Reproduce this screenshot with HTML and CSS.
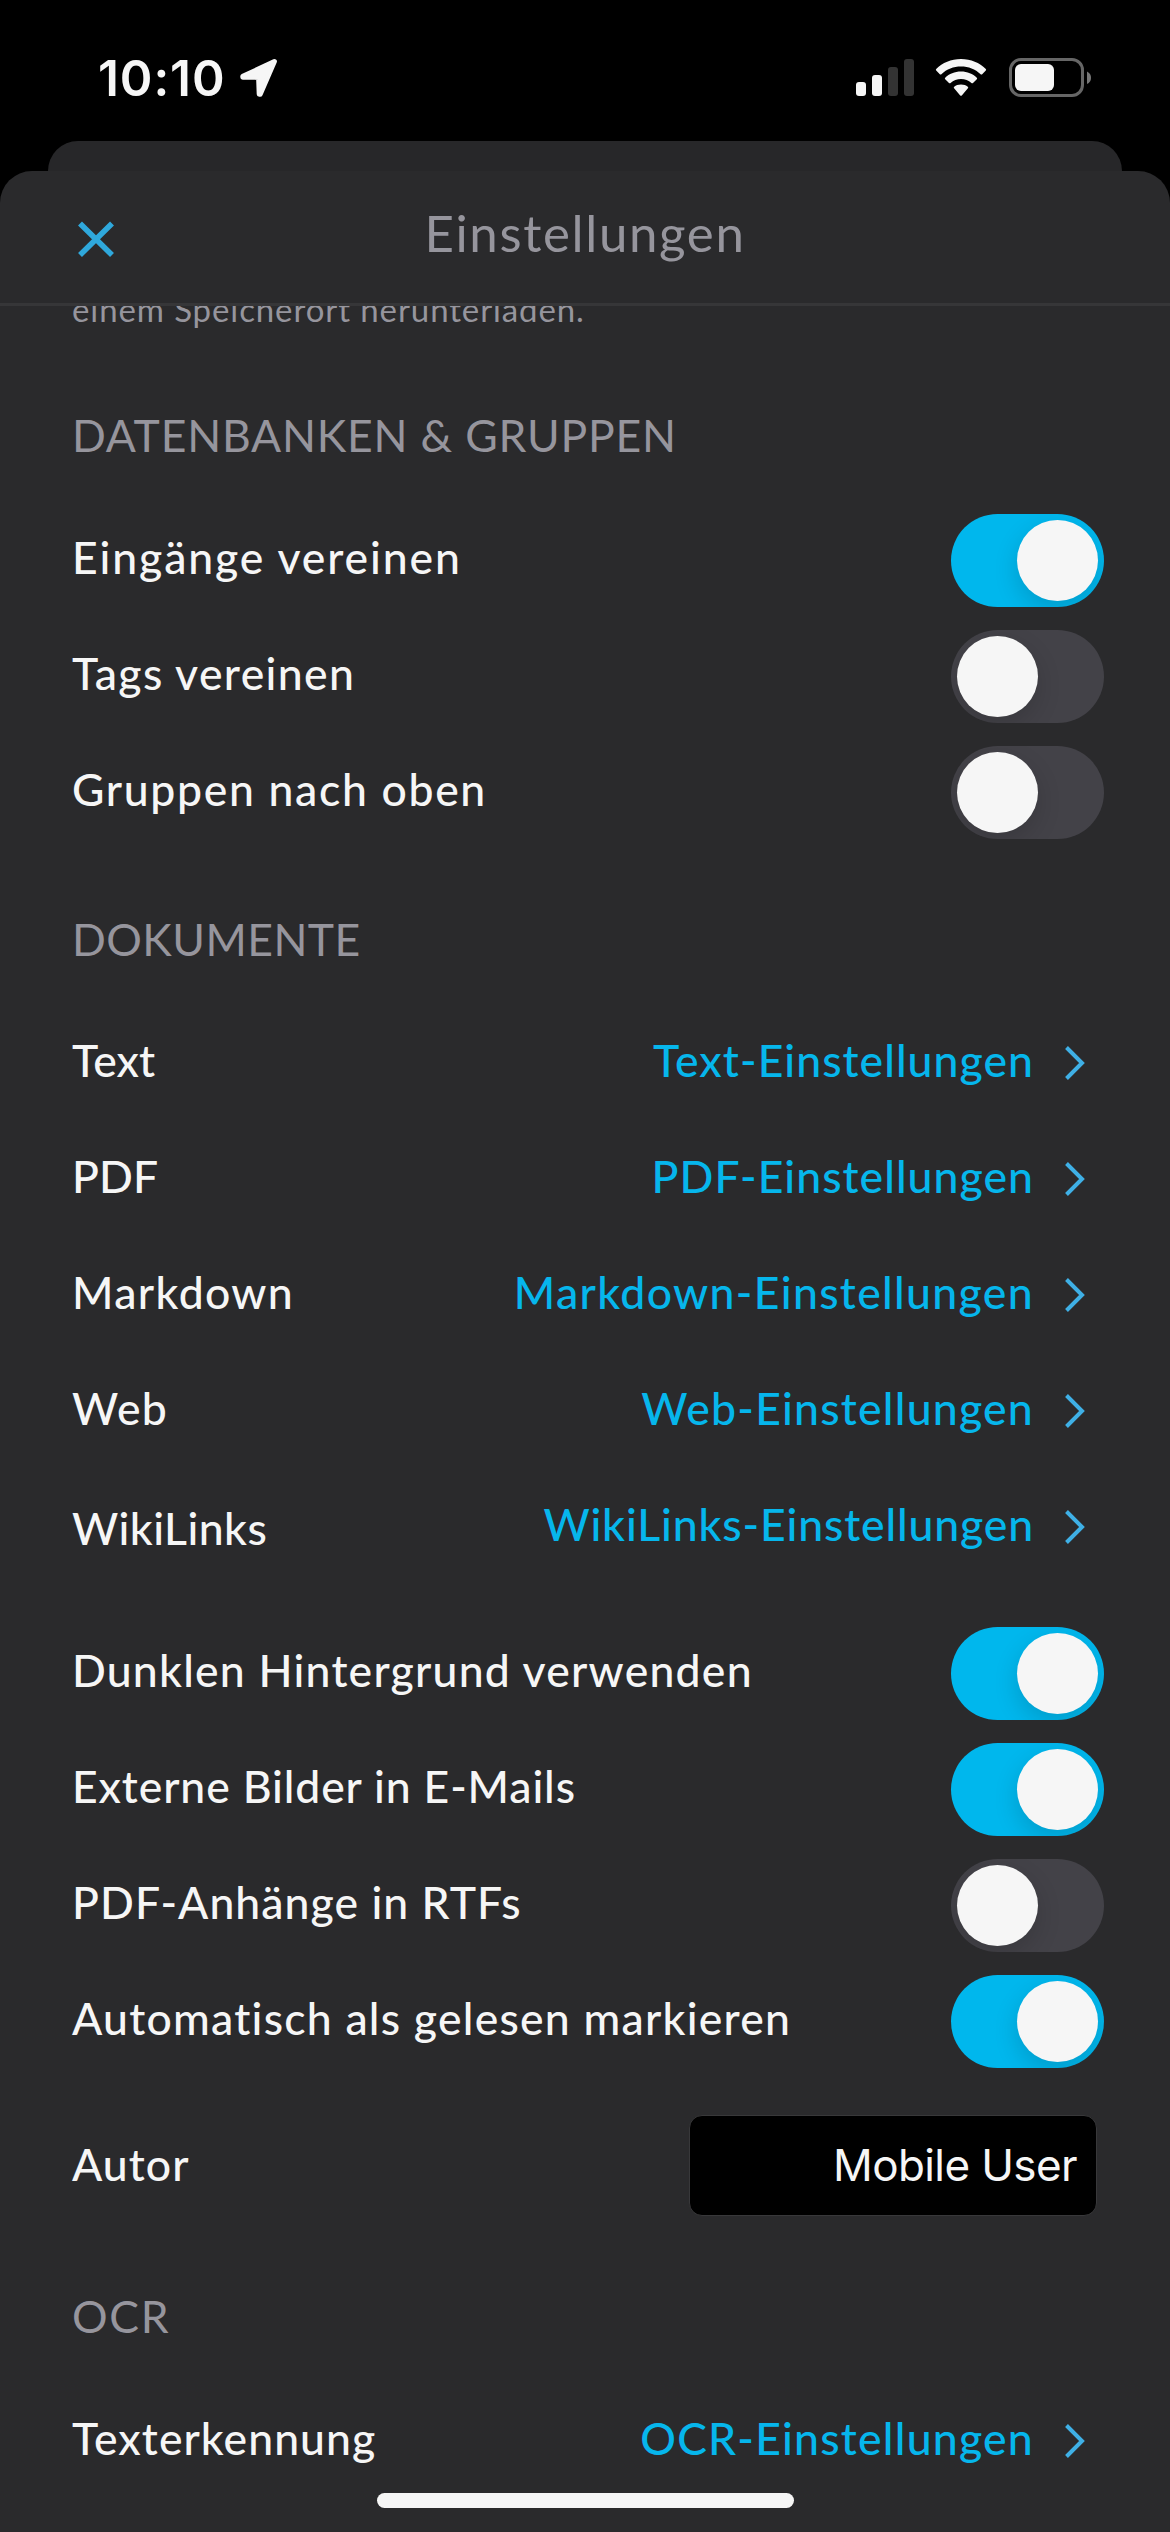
FILE: index.html
```html
<!DOCTYPE html>
<html lang="de">
<head>
<meta charset="utf-8">
<title>Einstellungen</title>
<link rel="stylesheet" href="styles.css">
</head>
<body>
<svg class="defs" width="0" height="0" aria-hidden="true">
  <symbol id="chevron" viewBox="0 0 22 36"><path d="M2.5 2.5 L18 18 L2.5 33.5" fill="none" stroke="currentColor" stroke-width="4"/></symbol>
</svg>

<header class="status">
  <div class="status-left">
    <span class="time">10:10</span>
    <svg class="location" viewBox="0 0 42 42" width="42" height="42"><path d="M36.4 4.6 L4.8 19.3 L4.8 20.2 L20.6 20.4 L21.2 37.2 L22.2 37.2 Z" fill="#f6f6f6" stroke="#f6f6f6" stroke-width="5" stroke-linejoin="round"/></svg>
  </div>
  <div class="status-right">
    <svg viewBox="0 0 58 40" width="58" height="40">
      <rect x="0" y="24" width="10" height="14" rx="3" fill="#f6f6f6"/>
      <rect x="16" y="17" width="10" height="21" rx="3" fill="#f6f6f6"/>
      <rect x="32" y="9" width="10" height="29" rx="3" fill="#333"/>
      <rect x="48" y="1" width="10" height="37" rx="3" fill="#333"/>
    </svg>
    <svg class="wifi" viewBox="0 0 52 40" width="52" height="40" fill="#f6f6f6">
      <path d="M26 1 C16 1 7.500 4.800 1.200 11 Q.5 11.800 1.200 12.600 L4.800 16.200 Q5.600 16.900 6.400 16.200 C11.700 11 18.500 8.500 26 8.500 C33.500 8.500 40.300 11 45.600 16.200 Q46.400 16.900 47.200 16.200 L50.800 12.600 Q51.500 11.800 50.800 11 C44.500 4.800 36 1 26 1 Z"/>
      <path d="M26 13.600 C19.700 13.600 14.200 16 10.200 19.700 Q9.400 20.500 10.200 21.300 L14 25 Q14.800 25.700 15.600 25 C18.400 22.500 22 21.100 26 21.100 C30 21.100 33.600 22.500 36.400 25 Q37.200 25.700 38 25 L41.800 21.300 Q42.600 20.500 41.800 19.700 C37.800 16 32.300 13.600 26 13.600 Z"/>
      <path d="M26 26.400 C23.200 26.400 20.900 27.300 19.200 28.700 Q18.300 29.500 19.100 30.300 L25.200 37.500 Q26 38.200 26.800 37.500 L32.900 30.300 Q33.700 29.500 32.800 28.700 C31.100 27.300 28.800 26.400 26 26.400 Z"/>
    </svg>
    <svg class="battery" viewBox="0 0 83 40" width="83" height="40">
      <rect x="1.500" y="1.500" width="72" height="36" rx="10.500" fill="none" stroke="#666" stroke-width="3"/>
      <rect x="6" y="6" width="39" height="27" rx="6" fill="#f6f6f6"/>
      <path d="M78 13.500 Q82 15.500 82 19.700 Q82 24 78 26 Z" fill="#777"/>
    </svg>
  </div>
</header>

<div class="card-behind"></div>

<main class="sheet">
  <div class="titlebar">
    <svg class="close" viewBox="0 0 38 38" width="38" height="38"><path d="M3 3.500 L35 35 M35 3.500 L3 35" fill="none" stroke="#2fa8dc" stroke-width="5.600"/></svg>
    <h1 class="title">Einstellungen</h1>
  </div>

  <div class="scroller">
    <p class="footnote">einem Speicherort herunterladen.</p>

    <section class="section section-databases">
      <h2 class="heading">DATENBANKEN &amp; GRUPPEN</h2>
      <div class="row"><span class="label track-7">Eingänge vereinen</span><span class="toggle on"></span></div>
      <div class="row"><span class="label track-5">Tags vereinen</span><span class="toggle"></span></div>
      <div class="row"><span class="label track-6">Gruppen nach oben</span><span class="toggle"></span></div>
    </section>

    <section class="section section-documents">
      <h2 class="heading track-1">DOKUMENTE</h2>
      <div class="row"><span class="label track-0">Text</span><a class="link track-3">Text-Einstellungen</a><svg class="chevron"><use href="#chevron"/></svg></div>
      <div class="row"><span class="label track-0">PDF</span><a class="link track-3">PDF-Einstellungen</a><svg class="chevron"><use href="#chevron"/></svg></div>
      <div class="row"><span class="label track-5">Markdown</span><a class="link track-5">Markdown-Einstellungen</a><svg class="chevron"><use href="#chevron"/></svg></div>
      <div class="row"><span class="label track-4">Web</span><a class="link track-4">Web-Einstellungen</a><svg class="chevron"><use href="#chevron"/></svg></div>
      <div class="row"><span class="label label-low track-1">WikiLinks</span><a class="link track-2">WikiLinks-Einstellungen</a><svg class="chevron"><use href="#chevron"/></svg></div>

      <div class="group">
        <div class="row"><span class="label track-4">Dunklen Hintergrund verwenden</span><span class="toggle on"></span></div>
        <div class="row"><span class="label track-2">Externe Bilder in E-Mails</span><span class="toggle on"></span></div>
        <div class="row"><span class="label track-3">PDF-Anhänge in RTFs</span><span class="toggle"></span></div>
        <div class="row"><span class="label track-4">Automatisch als gelesen markieren</span><span class="toggle on"></span></div>
      </div>

      <div class="row row-author"><span class="label track-3">Autor</span><span class="field">Mobile User</span></div>
    </section>

    <section class="section section-ocr">
      <h2 class="heading track-6">OCR</h2>
      <div class="row"><span class="label track-3">Texterkennung</span><a class="link track-4">OCR-Einstellungen</a><svg class="chevron"><use href="#chevron"/></svg></div>
    </section>
  </div>
</main>

<div class="home-indicator"></div>
</body>
</html>
```
FILE: styles.css
```css
* { box-sizing: border-box; }

body {
  margin: 0;
  width: 1170px;
  height: 2532px;
  overflow: hidden;
  display: flex;
  flex-direction: column;
  background: #000;
  color: #f6f6f6;
  font-family: Lato, "Noto Sans", sans-serif;
}

h1, h2, p { margin: 0; font-weight: 400; }
svg { display: block; flex: none; }
.defs { position: absolute; }

/* Status bar */
.status {
  flex: none;
  height: 141px;
  padding: 15px 78px 0 98px;
  display: flex;
  align-items: center;
  justify-content: space-between;
}
.status-left, .status-right { display: flex; align-items: center; }
.time {
  width: 140px;
  font: 600 49.5px/60px Inter, sans-serif;
  letter-spacing: 0.9px;
}
.wifi { margin-left: 21px; }
.battery { margin-left: 22px; }

/* Stacked sheets */
.card-behind {
  flex: none;
  height: 30px;
  margin: 0 48px;
  border-radius: 30px 30px 0 0;
  background: #272729;
}
.sheet {
  flex: 1;
  min-height: 0;
  display: flex;
  flex-direction: column;
  border-radius: 32px 32px 0 0;
  background: #2a2a2c;
}
.titlebar {
  flex: none;
  height: 135px;
  padding: 0 77px;
  display: grid;
  grid-template-columns: 38px 1fr 38px;
  align-items: center;
  border-bottom: 3px solid #363638;
}
.close { margin-top: 3px; }
.title {
  padding-bottom: 8px;
  text-align: center;
  font-size: 51px;
  line-height: 62px;
  letter-spacing: 1.65px;
  color: #96959d;
}

.scroller { flex: 1; min-height: 0; overflow: hidden; }
.footnote {
  margin-top: -17px;
  padding-left: 72px;
  font-size: 33px;
  line-height: 40px;
  letter-spacing: 0.9px;
  color: #96959d;
}

/* Sections */
.section { padding: 0 66px 0 72px; }
.section-databases { margin-top: 79px; }
.section-documents { margin-top: 62px; }
.section-ocr { margin-top: 64px; }
.heading {
  margin-bottom: 39px;
  font-size: 44.5px;
  line-height: 54px;
  letter-spacing: 0.8px;
  color: #96959d;
}
.section-databases .heading, .section-ocr .heading { margin-bottom: 40px; }

.row { display: flex; align-items: center; height: 116px; }
.label, .link {
  padding-bottom: 6px;
  font-size: 44.5px;
  line-height: 54px;
  font-weight: 500;
  white-space: nowrap;
}
.label { margin-right: auto; }
.label-low { padding: 2px 0 0; }
.link { color: #06b6ec; }
.chevron {
  width: 22px;
  height: 36px;
  margin: 0 18px 0 30px;
  color: #3fb0e6;
}
.group { margin-top: 30px; }

/* Switches */
.toggle {
  display: flex;
  width: 153px;
  height: 93px;
  padding: 6px;
  overflow: hidden;
  border-radius: 47px;
  background: #434248;
}
.toggle::before {
  content: "";
  width: 81px;
  height: 81px;
  border-radius: 50%;
  background: #f6f6f6;
  box-shadow: 0 9px 24px rgba(0, 0, 0, 0.15);
}
.toggle.on { justify-content: flex-end; background: #00b7ed; }

.row-author { height: 120px; margin-top: 26px; padding-right: 7px; }
.row-author .label { padding-bottom: 3px; }
.field {
  width: 408px;
  height: 101px;
  padding-right: 19px;
  border: 1px solid #38383a;
  border-radius: 13px;
  background: #000;
  text-align: right;
  font: 400 44px/99px Inter, sans-serif;
  letter-spacing: -0.6px;
}

/* Tracking steps */
.track-0 { letter-spacing: 0.15px; }
.track-1 { letter-spacing: 0.45px; }
.track-2 { letter-spacing: 0.88px; }
.track-3 { letter-spacing: 1.06px; }
.track-4 { letter-spacing: 1.25px; }
.track-5 { letter-spacing: 1.36px; }
.track-6 { letter-spacing: 1.68px; }
.track-7 { letter-spacing: 1.9px; }

.home-indicator {
  position: absolute;
  left: 377px;
  top: 2493px;
  width: 417px;
  height: 15px;
  border-radius: 8px;
  background: #f6f6f6;
}
```
